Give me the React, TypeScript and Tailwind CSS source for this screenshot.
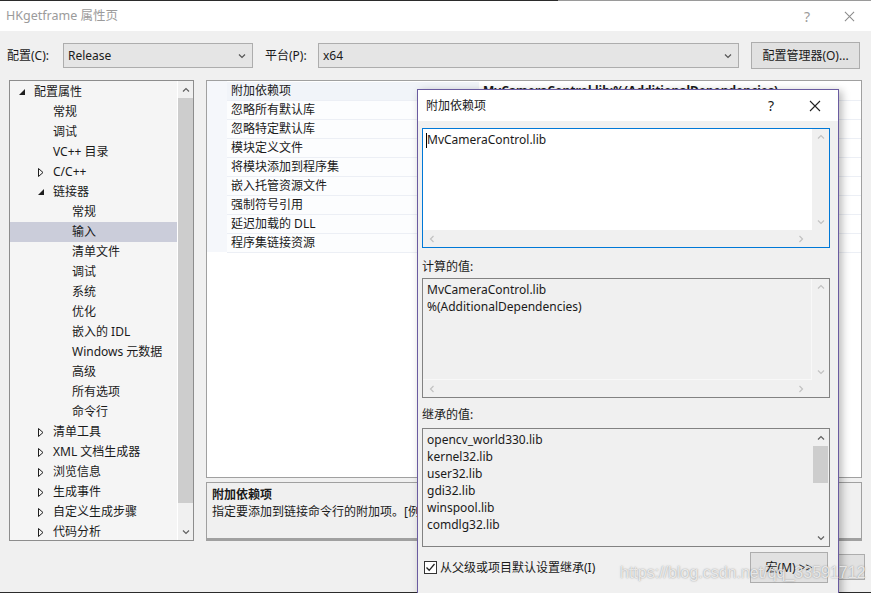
import React from "react";

type Dir = "up" | "down" | "left" | "right";

function Chev({ dir, color = "#c2c2c2", size = 8 }: { dir: Dir; color?: string; size?: number }) {
  const pts: Record<Dir, string> = {
    up: "1,5.5 4,2.5 7,5.5",
    down: "1,2.5 4,5.5 7,2.5",
    left: "5.5,1 2.5,4 5.5,7",
    right: "2.5,1 5.5,4 2.5,7",
  };
  return (
    <svg width={size} height={size} viewBox="0 0 8 8" className="block">
      <polyline points={pts[dir]} fill="none" stroke={color} strokeWidth="1.2" />
    </svg>
  );
}

function XIcon({ color, size = 12 }: { color: string; size?: number }) {
  return (
    <svg width={size} height={size} viewBox="0 0 12 12" className="block">
      <path d="M1 1 L11 11 M11 1 L1 11" stroke={color} strokeWidth="1.1" fill="none" />
    </svg>
  );
}

type TreeItem = { label: string; level: 0 | 1 | 2; arrow?: "open" | "closed"; selected?: boolean };

const tree: TreeItem[] = [
  { label: "配置属性", level: 0, arrow: "open" },
  { label: "常规", level: 1 },
  { label: "调试", level: 1 },
  { label: "VC++ 目录", level: 1 },
  { label: "C/C++", level: 1, arrow: "closed" },
  { label: "链接器", level: 1, arrow: "open" },
  { label: "常规", level: 2 },
  { label: "输入", level: 2, selected: true },
  { label: "清单文件", level: 2 },
  { label: "调试", level: 2 },
  { label: "系统", level: 2 },
  { label: "优化", level: 2 },
  { label: "嵌入的 IDL", level: 2 },
  { label: "Windows 元数据", level: 2 },
  { label: "高级", level: 2 },
  { label: "所有选项", level: 2 },
  { label: "命令行", level: 2 },
  { label: "清单工具", level: 1, arrow: "closed" },
  { label: "XML 文档生成器", level: 1, arrow: "closed" },
  { label: "浏览信息", level: 1, arrow: "closed" },
  { label: "生成事件", level: 1, arrow: "closed" },
  { label: "自定义生成步骤", level: 1, arrow: "closed" },
  { label: "代码分析", level: 1, arrow: "closed" },
];

const props = [
  "附加依赖项",
  "忽略所有默认库",
  "忽略特定默认库",
  "模块定义文件",
  "将模块添加到程序集",
  "嵌入托管资源文件",
  "强制符号引用",
  "延迟加载的 DLL",
  "程序集链接资源",
];

const inherited = [
  "opencv_world330.lib",
  "kernel32.lib",
  "user32.lib",
  "gdi32.lib",
  "winspool.lib",
  "comdlg32.lib",
];

function TreeArrow({ kind }: { kind?: "open" | "closed" }) {
  if (kind === "open")
    return (
      <svg width="6" height="6" viewBox="0 0 6 6" className="block ml-[1px]">
        <polygon points="6,0 6,6 0,6" fill="#1e1e1e" />
      </svg>
    );
  if (kind === "closed")
    return (
      <svg width="6" height="9" viewBox="0 0 6 9" className="block ml-[1px]">
        <polygon points="0.5,0.5 5,4.5 0.5,8.5" fill="none" stroke="#1e1e1e" strokeWidth="1" />
      </svg>
    );
  return null;
}

export default function App() {
  const font = "font-['Noto_Sans','Noto_Sans_CJK_SC',sans-serif]";
  return (
    <div className={`relative w-[871px] h-[593px] overflow-hidden bg-[#f0f0f0] text-[12px] text-[#1a1a1a] ${font}`}>
      {/* window top line */}
      <div className="flex h-[1px]">
        <div className="w-[558px] bg-[#2b2b2b]" />
        <div className="flex-1 bg-[#9a9a9a]" />
      </div>
      {/* title bar */}
      <div className="h-[30px] bg-white flex items-center pl-[6px] text-[#9b9b9b] text-[12.5px]">
        <span>HKgetframe 属性页</span>
        <span className="ml-auto mr-[34px] text-[14px]">?</span>
        <span className="mr-[16px]">
          <XIcon color="#8a8a8a" size={11} />
        </span>
      </div>
      {/* toolbar */}
      <div className="h-[49px] flex items-center pl-[7px]">
        <span className="w-[56px]">配置(C):</span>
        <div className="w-[190px] h-[25px] border border-[#adadad] bg-[#e5e5e5] flex items-center pl-[4px] pr-[6px]">
          <span>Release</span>
          <span className="ml-auto">
            <Chev dir="down" color="#555" />
          </span>
        </div>
        <span className="ml-[12px] w-[53px]">平台(P):</span>
        <div className="w-[421px] h-[25px] border border-[#adadad] bg-[#e5e5e5] flex items-center pl-[4px] pr-[6px]">
          <span>x64</span>
          <span className="ml-auto">
            <Chev dir="down" color="#555" />
          </span>
        </div>
        <div className="ml-[12px] w-[109px] h-[27px] border border-[#adadad] bg-[#e1e1e1] flex items-center justify-center">
          配置管理器(O)...
        </div>
      </div>

      {/* main */}
      <div className="flex pl-[9px] h-[461px]">
        {/* tree */}
        <div className="w-[185px] h-[461px] border border-[#8d8d8d] bg-[#f5f5f5] flex">
          <div className="flex-1 pt-[1px]">
            {tree.map((t, i) => (
              <div
                key={i}
                className={`h-[20px] flex items-center ${t.selected ? "bg-[#cbcdda]" : ""} ${
                  t.level === 0 ? "pl-[8px]" : t.level === 1 ? "pl-[27px]" : "pl-[46px]"
                }`}
              >
                <span className="w-[16px] flex items-center">
                  <TreeArrow kind={t.arrow} />
                </span>
                <span className="whitespace-nowrap">{t.label}</span>
              </div>
            ))}
          </div>
          <div className="w-[16px] border-l border-white bg-[#f0f0f0] flex flex-col items-center">
            <div className="h-[17px] flex items-center">
              <Chev dir="up" color="#606060" />
            </div>
            <div className="w-[15px] h-[405px] bg-[#cdcdcd]" />
            <div className="flex-1" />
            <div className="h-[17px] flex items-center">
              <Chev dir="down" color="#606060" />
            </div>
          </div>
        </div>

        {/* right */}
        <div className="ml-[12px] w-[656px] flex flex-col">
          <div className="h-[398px] border border-[#a0a0a0] bg-white flex">
            <div className="w-[20px] h-[171px] bg-[#f5f7fb]" />
            <div className="flex-1 pt-[1px]">
              {props.map((p, i) => (
                <div key={i} className="h-[19px] flex border-b border-[#eceff5]">
                  <div className={`w-[252px] pl-[4px] flex items-center ${i === 0 ? "bg-[#f1f4f9]" : "bg-[#fcfdfe]"}`}>
                    {p}
                  </div>
                  <div className="flex-1 pl-[4px] flex items-center font-bold whitespace-nowrap overflow-hidden">
                    {i === 0 ? "MvCameraControl.lib;%(AdditionalDependencies)" : ""}
                  </div>
                </div>
              ))}
            </div>
          </div>
          <div className="mt-[4px] h-[59px] border border-[#a0a0a0] border-b-[3px] border-b-[#a0a0a0] bg-[#f0f0f0] pl-[5px] pt-[3px] overflow-hidden">
            <div className="font-bold leading-[17px]">附加依赖项</div>
            <div className="leading-[17px] whitespace-nowrap">指定要添加到链接命令行的附加项。[例如 kernel32.lib]</div>
          </div>
        </div>
      </div>

      {/* bottom buttons of main window */}
      <div className="flex justify-end pr-[6px] pt-[13px] gap-[10px]">
        <div className="w-[75px] h-[26px] border border-[#adadad] bg-[#e1e1e1] flex items-center justify-center">确定</div>
        <div className="w-[75px] h-[26px] border border-[#adadad] bg-[#e1e1e1] flex items-center justify-center">取消</div>
        <div className="w-[75px] h-[26px] border border-[#adadad] bg-[#e1e1e1] flex items-center justify-center pr-[20px]">应用(A)</div>
      </div>
      <div className="absolute left-0 right-0 bottom-0 h-[1px] bg-[#2b2b2b]" />

      {/* dialog */}
      <div className="absolute left-[417px] top-[89px] w-[422px] h-[520px] border border-[#6a5ba0] bg-[#f0f0f0] shadow-[3px_2px_8px_rgba(0,0,0,0.28)] flex flex-col">
        <div className="h-[31px] bg-white flex items-center pl-[8px]">
          <span>附加依赖项</span>
          <span className="ml-auto mr-[35px] text-[14px]">?</span>
          <span className="mr-[17px]">
            <XIcon color="#222" size={12} />
          </span>
        </div>
        <div className="pl-[4px] pt-[7px]">
          {/* edit box */}
          <div className="w-[408px] h-[120px] border border-[#0078d7] bg-[#f0f0f0] flex flex-col">
            <div className="flex flex-1">
              <div className="flex-1 bg-white pl-[4px] pt-[2px] relative">
                <span className="absolute left-[3px] top-[4px] w-[1px] h-[15px] bg-black" />
                <span className="leading-[17px]">MvCameraControl.lib</span>
              </div>
              <div className="w-[17px] flex flex-col items-center justify-between py-[4px]">
                <Chev dir="up" />
                <Chev dir="down" />
              </div>
            </div>
            <div className="h-[17px] flex items-center justify-between pl-[5px] pr-[24px]">
              <Chev dir="left" />
              <Chev dir="right" />
            </div>
          </div>

          <div className="mt-[10px] h-[17px] leading-[17px]">计算的值:</div>
          <div className="mt-[3px] w-[408px] h-[120px] border border-[#828282] bg-[#f0f0f0] flex flex-col">
            <div className="flex flex-1">
              <div className="flex-1 pl-[4px] pt-[2px] border-r border-b border-[#f8f8f8]">
                <div className="leading-[17px]">MvCameraControl.lib</div>
                <div className="leading-[17px]">%(AdditionalDependencies)</div>
              </div>
              <div className="w-[17px] flex flex-col items-center justify-between py-[4px]">
                <Chev dir="up" />
                <Chev dir="down" />
              </div>
            </div>
            <div className="h-[17px] flex items-center justify-between pl-[5px] pr-[24px]">
              <Chev dir="left" />
              <Chev dir="right" />
            </div>
          </div>

          <div className="mt-[8px] h-[17px] leading-[17px]">继承的值:</div>
          <div className="mt-[5px] w-[408px] h-[119px] border border-[#828282] bg-[#f0f0f0] flex">
            <div className="flex-1 pl-[4px] pt-[2px]">
              {inherited.map((l) => (
                <div key={l} className="leading-[17px]">
                  {l}
                </div>
              ))}
            </div>
            <div className="w-[17px] flex flex-col items-center">
              <div className="h-[17px] flex items-center">
                <Chev dir="up" color="#606060" />
              </div>
              <div className="w-[15px] h-[37px] bg-[#cdcdcd]" />
              <div className="flex-1" />
              <div className="h-[17px] flex items-center">
                <Chev dir="down" color="#606060" />
              </div>
            </div>
          </div>

          <div className="mt-[5px] flex items-center w-[408px]">
            <div className="ml-[2px] w-[13px] h-[13px] border border-[#333] bg-white flex items-center justify-center">
              <svg width="11" height="11" viewBox="0 0 11 11" className="block">
                <polyline points="1.5,5.5 4.2,8.3 9.5,2" fill="none" stroke="#222" strokeWidth="1.3" />
              </svg>
            </div>
            <span className="ml-[3px]">从父级或项目默认设置继承(I)</span>
            <div className="ml-auto mr-[2px] w-[78px] h-[31px] border border-[#adadad] bg-[#e1e1e1] flex items-center justify-center">
              宏(M) &gt;&gt;
            </div>
          </div>
        </div>
      </div>

      {/* watermark */}
      <div className="absolute left-[620px] top-[562px] text-[16px] leading-[22px] text-[rgba(255,255,255,0.75)] [text-shadow:0_0_1.5px_rgba(90,90,90,0.7)] font-['Liberation_Sans',sans-serif] whitespace-nowrap">
        https://blog.csdn.net/qq_33591712
      </div>
    </div>
  );
}
